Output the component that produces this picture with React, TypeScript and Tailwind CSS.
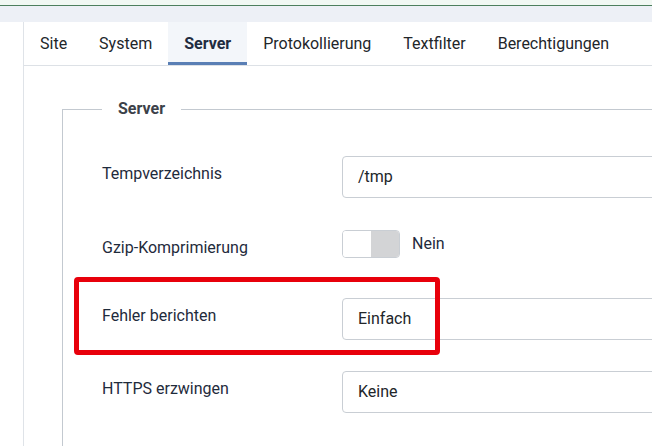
import React from 'react';

const tabs = ['Site', 'System', 'Server', 'Protokollierung', 'Textfilter', 'Berechtigungen'];

function Tab({ label, active }: { label: string; active?: boolean }) {
  return (
    <div
      className={
        active
          ? 'h-full px-4 flex items-center bg-[#f3f6fa] border-b-[3px] border-[#5a7fb5] font-bold text-[#1f2c40] pt-[3px]'
          : 'h-full px-4 flex items-center text-[#22262a]'
      }
    >
      {label}
    </div>
  );
}

function Row({ label, children, className }: { label: string; children: React.ReactNode; className?: string }) {
  return (
    <div className={'flex items-start ' + (className ?? '')}>
      <div className="w-[240px] shrink-0 pt-[6px] text-[#1f2b3c] leading-6">{label}</div>
      <div className="flex-1">{children}</div>
    </div>
  );
}

function TextBox({ value }: { value: string }) {
  return (
    <div className="h-[42px] w-[340px] rounded-[4px] border border-[#c9ced4] bg-white pl-[15px] flex items-center text-[#22262a]">
      {value}
    </div>
  );
}

export default function App() {
  return (
    <div className="relative w-[652px] h-[446px] overflow-hidden bg-white text-[16px]" style={{ fontFamily: 'Roboto, "Noto Sans", sans-serif' }}>
      <div className="h-[5px] bg-[#f1f8f3]" />
      <div className="h-px bg-[#4d7f5d]" />
      <div className="h-[16px] bg-[#edf0f6]" />

      <div className="flex h-[424px] overflow-hidden">
        <div className="w-[23px] shrink-0 bg-white" />
        <div className="flex-1 border-l border-[#dfe3e8] flex flex-col">
          <div className="h-[44px] shrink-0 flex items-stretch border-b border-[#dde1e6]">
            {tabs.map((t) => (
              <Tab key={t} label={t} active={t === 'Server'} />
            ))}
          </div>

          <div className="pl-[38px] pt-[32px] shrink-0">
            <fieldset className="border-l border-t border-[#c3c9d0] pl-[39px] h-[360px]">
              <legend className="px-4 font-bold text-[#3c4149] leading-[22px]">Server</legend>

              <Row label="Tempverzeichnis" className="mt-[36px]">
                <TextBox value="/tmp" />
              </Row>

              <Row label="Gzip-Komprimierung" className="mt-[32px]">
                <div className="flex items-center h-[28px]">
                  <div className="w-[58px] h-[28px] rounded-[4px] border border-[#c9ced4] overflow-hidden flex">
                    <div className="w-1/2 bg-white" />
                    <div className="w-1/2 bg-[#d3d4d6]" />
                  </div>
                  <span className="ml-[12px] text-[#1f2b3c]">Nein</span>
                </div>
              </Row>

              <Row label="Fehler berichten" className="mt-[38px]">
                <TextBox value="Einfach" />
              </Row>

              <Row label="HTTPS erzwingen" className="mt-[31px]">
                <TextBox value="Keine" />
              </Row>
            </fieldset>
          </div>
        </div>
      </div>

      <div className="absolute left-[74px] top-[277px] w-[366px] h-[78px] border-[5px] border-[#e8000b] rounded-[4px]" />
    </div>
  );
}
